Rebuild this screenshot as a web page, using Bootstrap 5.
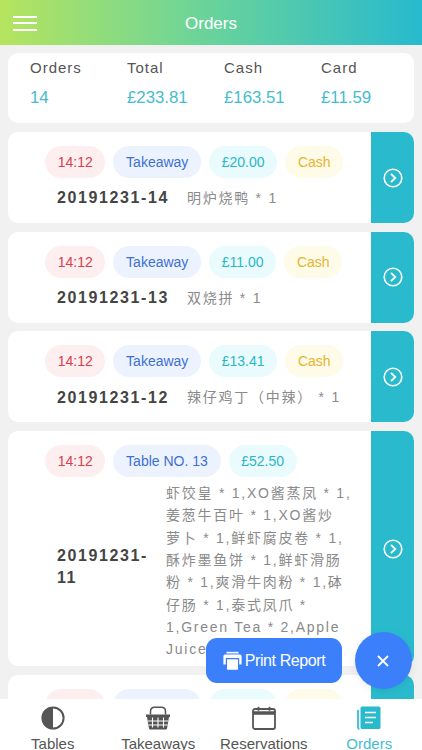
<!doctype html>
<html lang="en">
<head>
<meta charset="utf-8">
<meta name="viewport" content="width=device-width, initial-scale=1">
<title>Orders</title>
<link href="https://cdn.jsdelivr.net/npm/bootstrap@5.3.0/dist/css/bootstrap.min.css" rel="stylesheet">
<style>
html,body{height:100%;overflow:hidden}
body{background:#f1f1f1;font-family:"Liberation Sans","Noto Sans CJK SC",sans-serif;color:#555}
.screen{height:750px;width:422px}
.topbar{height:45px;flex:none;padding:0 13px;background:linear-gradient(90deg,#b6e45e 0%,#6fd596 45%,#27bace 100%);color:#fff}
.burger{width:24px;height:15px;border:0;background:none;padding:0;flex-direction:column;justify-content:space-between;margin-top:1px}
.burger span{display:block;height:2px;background:#fff}
.top-title{font-size:17px;left:0;right:0;top:0;line-height:47px;text-align:center}
.content{padding:8px 8px 0;overflow:hidden;min-height:0}
.summary{height:70px;padding:6px 0 0 22px;border:0;border-radius:10px;margin-bottom:9px}
.stat{width:97px;flex:none}
.stat-label{font-size:15px;letter-spacing:1px;line-height:18px;margin-top:0;color:#555}
.stat-value{font-size:16.8px;line-height:20px;margin-top:11px;color:#45bccf}
.orders{gap:8.7px}
.order{border:0;border-radius:10px;overflow:hidden;min-height:91px;flex-direction:row;flex:none}
.order-main{padding:14px 0 0 37px;min-width:0}
.order-side{width:43px;flex:none;background:#29bbcd}
.pills{gap:8px}
.pill{height:32px;line-height:32px;border-radius:16px;padding:0 12.7px;font-size:14px;white-space:nowrap}
.p-red{background:#fdeeef;color:#d8404d}
.p-blue{background:#edf3fe;color:#3d70d2}
.p-teal{background:#e9fbfd;color:#2bb6c8}
.p-yellow{background:#fffbe9;color:#e6b52e}
.order-row{padding-left:12px;margin-top:9px;gap:18px}
.order-no{font-weight:700;font-size:16px;letter-spacing:1.6px;color:#444;line-height:22px;white-space:nowrap}
.order-items{font-size:14px;letter-spacing:1.75px;color:#8a8a8a;line-height:22.3px}
.tall .order-row{margin-top:5px;gap:6px}
.tall .order-no{width:103px;white-space:normal;padding-bottom:15px}
.tall .order-items{width:188px;flex:none;padding-bottom:6px}
.tabbar{height:51px;padding-top:7px;flex:none;position:relative;z-index:2}
.tab{width:105.5px;color:#555;font-size:15px;line-height:18px;white-space:nowrap}
.tab svg{display:block;margin:0 auto 5px}
.tab-on{color:#45bccf}
.print-btn{position:absolute;left:206px;top:638px;width:136px;height:45px;background:#3b7ffb;border:0;border-radius:11px;color:#fff;font-size:16px;letter-spacing:-.4px;padding:0;z-index:3;gap:3px}
.close-btn{position:absolute;left:354.5px;top:632px;width:57px;height:57px;border-radius:50%;background:#3b7ffb;border:0;padding:0;z-index:3;box-shadow:0 2px 8px rgba(0,0,0,.08)}
</style>
</head>
<body>
<div class="screen d-flex flex-column">
  <header class="topbar d-flex align-items-center position-relative">
    <button class="burger d-flex" aria-label="Menu"><span class="w-100"></span><span class="w-100"></span><span class="w-100"></span></button>
    <div class="top-title position-absolute">Orders</div>
  </header>

  <main class="content flex-grow-1">
    <section class="card summary bg-white flex-row">
      <div class="stat"><div class="stat-label">Orders</div><div class="stat-value">14</div></div>
      <div class="stat"><div class="stat-label">Total</div><div class="stat-value">£233.81</div></div>
      <div class="stat"><div class="stat-label">Cash</div><div class="stat-value">£163.51</div></div>
      <div class="stat"><div class="stat-label">Card</div><div class="stat-value">£11.59</div></div>
    </section>

    <div class="orders d-flex flex-column">
      <article class="card order">
        <div class="order-main flex-grow-1">
          <div class="pills d-flex"><span class="pill p-red">14:12</span><span class="pill p-blue">Takeaway</span><span class="pill p-teal">£20.00</span><span class="pill p-yellow">Cash</span></div>
          <div class="order-row d-flex align-items-center"><div class="order-no">20191231-14</div><div class="order-items">明炉烧鸭 * 1</div></div>
        </div>
        <div class="order-side d-flex align-items-center justify-content-center"><svg width="20" height="20" viewBox="0 0 20 20" fill="none" stroke="#fff" stroke-width="1.6"><circle cx="10" cy="10" r="8.8"/><path d="M8 5.8l4.2 4.2L8 14.2" stroke-width="1.9"/></svg></div>
      </article>

      <article class="card order">
        <div class="order-main flex-grow-1">
          <div class="pills d-flex"><span class="pill p-red">14:12</span><span class="pill p-blue">Takeaway</span><span class="pill p-teal">£11.00</span><span class="pill p-yellow">Cash</span></div>
          <div class="order-row d-flex align-items-center"><div class="order-no">20191231-13</div><div class="order-items">双烧拼 * 1</div></div>
        </div>
        <div class="order-side d-flex align-items-center justify-content-center"><svg width="20" height="20" viewBox="0 0 20 20" fill="none" stroke="#fff" stroke-width="1.6"><circle cx="10" cy="10" r="8.8"/><path d="M8 5.8l4.2 4.2L8 14.2" stroke-width="1.9"/></svg></div>
      </article>

      <article class="card order">
        <div class="order-main flex-grow-1">
          <div class="pills d-flex"><span class="pill p-red">14:12</span><span class="pill p-blue">Takeaway</span><span class="pill p-teal">£13.41</span><span class="pill p-yellow">Cash</span></div>
          <div class="order-row d-flex align-items-center"><div class="order-no">20191231-12</div><div class="order-items">辣仔鸡丁（中辣） * 1</div></div>
        </div>
        <div class="order-side d-flex align-items-center justify-content-center"><svg width="20" height="20" viewBox="0 0 20 20" fill="none" stroke="#fff" stroke-width="1.6"><circle cx="10" cy="10" r="8.8"/><path d="M8 5.8l4.2 4.2L8 14.2" stroke-width="1.9"/></svg></div>
      </article>

      <article class="card order tall">
        <div class="order-main flex-grow-1">
          <div class="pills d-flex"><span class="pill p-red">14:12</span><span class="pill p-blue">Table NO. 13</span><span class="pill p-teal">£52.50</span></div>
          <div class="order-row d-flex align-items-center"><div class="order-no">20191231-11</div><div class="order-items">虾饺皇 * 1,XO酱蒸凤 * 1,姜葱牛百叶 * 1,XO酱炒<span class="text-nowrap">萝卜</span> * 1,鲜虾腐皮卷 * 1,酥炸墨鱼饼 * 1,鲜虾滑肠粉 * 1,爽滑牛肉粉 * 1,砵仔肠 * 1,泰式凤爪 * 1,Green Tea * 2,Apple Juice * 1</div></div>
        </div>
        <div class="order-side d-flex align-items-center justify-content-center"><svg width="20" height="20" viewBox="0 0 20 20" fill="none" stroke="#fff" stroke-width="1.6"><circle cx="10" cy="10" r="8.8"/><path d="M8 5.8l4.2 4.2L8 14.2" stroke-width="1.9"/></svg></div>
      </article>

      <article class="card order">
        <div class="order-main flex-grow-1">
          <div class="pills d-flex"><span class="pill p-red">14:12</span><span class="pill p-blue">Takeaway</span><span class="pill p-teal">£20.00</span><span class="pill p-yellow">Cash</span></div>
        </div>
        <div class="order-side"></div>
      </article>
    </div>
  </main>

  <nav class="tabbar bg-white d-flex">
    <div class="tab text-center">
      <svg width="24" height="24" viewBox="0 0 24 24"><circle cx="12" cy="12" r="10.6" fill="none" stroke="#555" stroke-width="2"/><path d="M12 1.4A10.6 10.6 0 0 0 12 22.6Z" fill="#555"/></svg>Tables
    </div>
    <div class="tab text-center">
      <svg width="26" height="24" viewBox="0 0 26 24" fill="#555"><path d="M5.5 8.5V5.5Q5.5 1.2 9.5 1.2H16.5Q20.5 1.2 20.5 5.5V8.5" fill="none" stroke="#555" stroke-width="1.5"/><path d="M1 8.5H25V11H24L22 22.5Q21.8 23.5 20.8 23.5H5.2Q4.2 23.5 4 22.5L2 11H1Z"/><path d="M7.5 11.5V21.5M13 11.5V21.5M18.5 11.5V21.5M3 15H23M3.5 19H22.5" stroke="#fff" stroke-width="1.1"/></svg>Takeaways
    </div>
    <div class="tab text-center">
      <svg width="24" height="24" viewBox="0 0 24 24" fill="none" stroke="#555"><rect x="1" y="3" width="22" height="20" rx="2" stroke-width="1.8"/><path d="M1 7h22" stroke-width="3.5"/><path d="M6.5 0.8v4M17.5 0.8v4" stroke-width="1.8"/></svg>Reservations
    </div>
    <div class="tab tab-on text-center">
      <svg width="24" height="24" viewBox="0 0 24 24"><rect x="3.5" y="0.5" width="20" height="22.5" rx="1.5" fill="#29bbcd"/><path d="M1 4V21.5Q1 23 2.5 23" fill="none" stroke="#29bbcd" stroke-width="1.7"/><path d="M8 6.5h11M8 11.5h11M8 16.5h8" stroke="#fff" stroke-width="1.7"/></svg>Orders
    </div>
  </nav>
</div>

<button class="print-btn d-flex align-items-center justify-content-center">
  <svg width="19" height="19" viewBox="0 0 19 19" fill="#fff"><path d="M3.5 0.8h12v1.7h-12z"/><path d="M2 3.6h15a1.6 1.6 0 0 1 1.6 1.6v8.3h-2.4V7H2.8v6.5H0.4V5.2A1.6 1.6 0 0 1 2 3.6z"/><rect x="4" y="8.2" width="11" height="10.5" rx=".6"/></svg><span>Print Report</span>
</button>
<button class="close-btn d-flex align-items-center justify-content-center" aria-label="Close"><svg width="12" height="12" viewBox="0 0 12 12" stroke="#fff" stroke-width="1.8"><path d="M1 1l10 10M11 1L1 11"/></svg></button>

<script src="https://cdn.jsdelivr.net/npm/bootstrap@5.3.0/dist/js/bootstrap.bundle.min.js"></script>
</body>
</html>
